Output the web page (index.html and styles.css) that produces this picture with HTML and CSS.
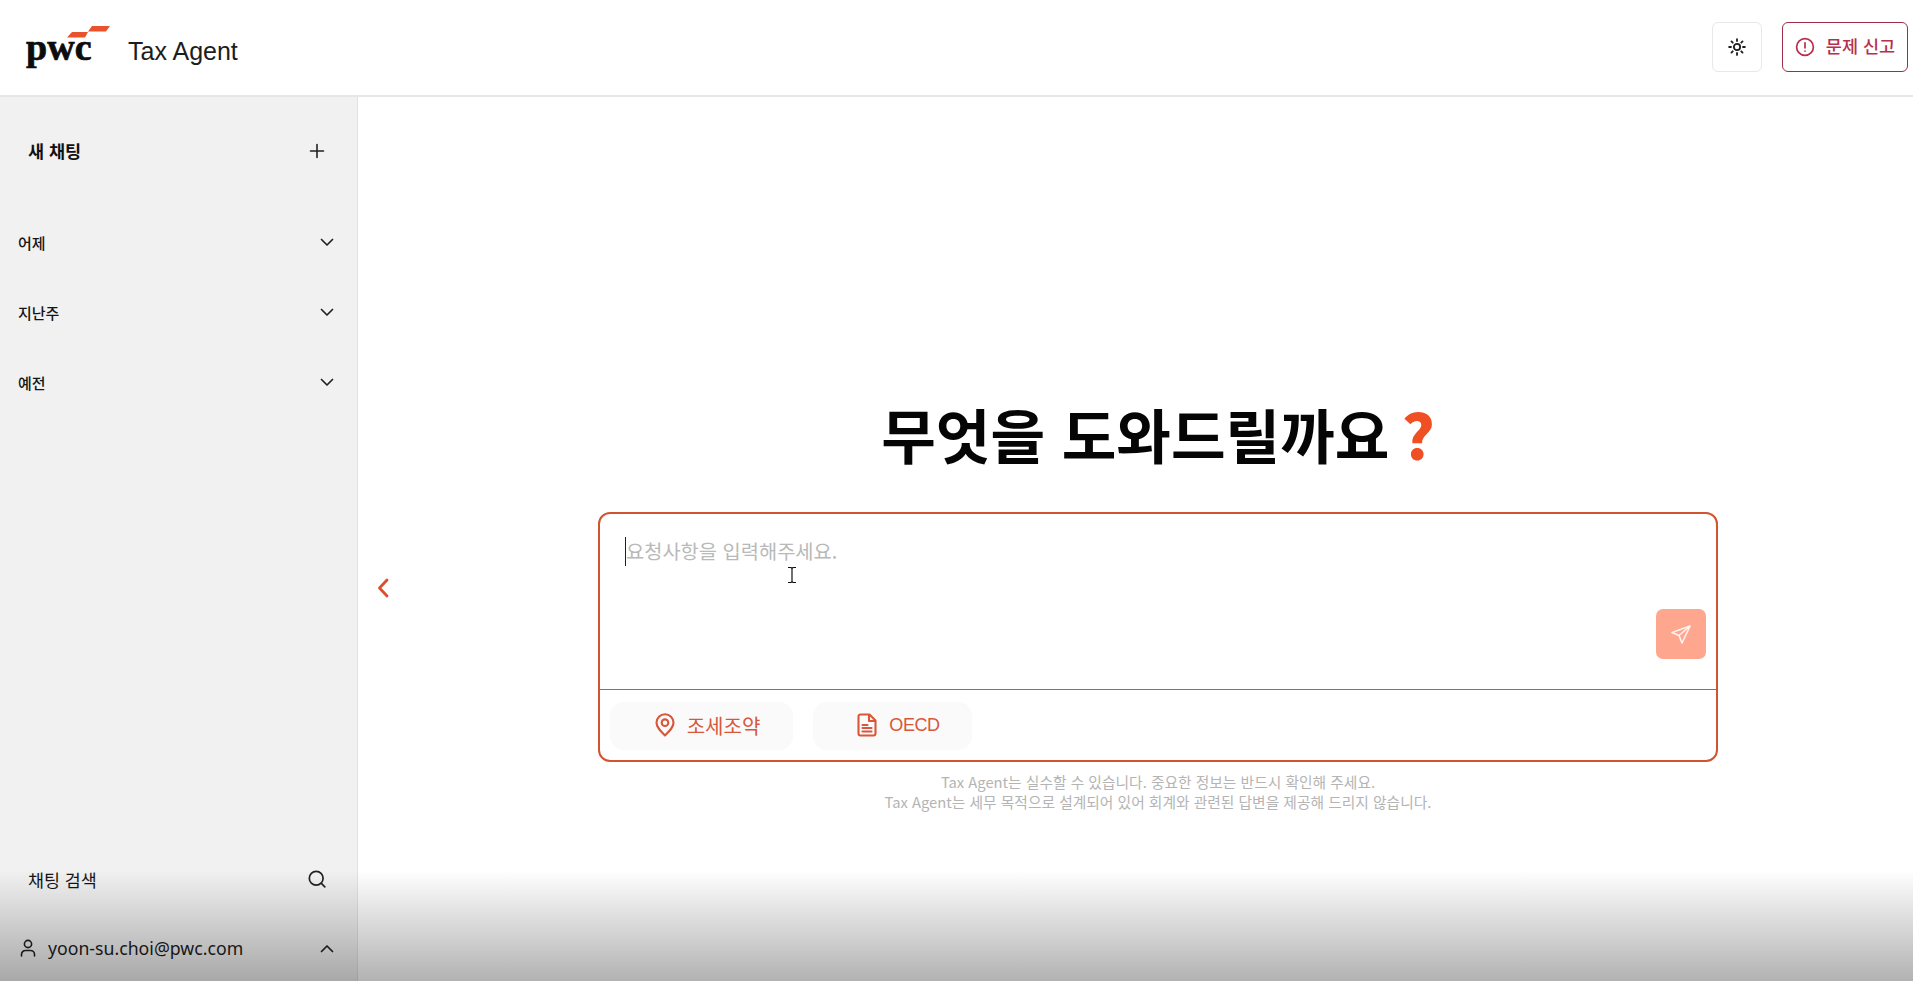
FILE: index.html
```html
<!DOCTYPE html>
<html lang="ko">
<head>
<meta charset="utf-8">
<title>Tax Agent</title>
<link rel="stylesheet" href="styles.css">
</head>
<body>
<div class="app">
  <header class="topbar">
    <div class="brand">
      <div class="logo">
        <svg class="logo-mark" width="43" height="12" viewBox="0 0 43 12"><polygon points="5,6 21,6 18,11.500 0,11.500" fill="#e8532b"/><polygon points="25,0 43,0 39,5.500 21,5.500" fill="#e8532b"/></svg>
        <span class="logo-text">pwc</span>
      </div>
      <span class="product">Tax Agent</span>
    </div>
    <div class="top-actions">
      <button class="theme-btn" aria-label="theme">
        <svg width="18" height="18" viewBox="0 0 24 24" fill="none" stroke="#1c1c1c" stroke-width="2.4" stroke-linecap="round"><circle cx="12" cy="12" r="4.2"/><path d="M12 1.500v2.500M12 20v2.500M1.500 12H4M20 12h2.500M4.600 4.600l1.700 1.700M17.700 17.700l1.700 1.700M4.600 19.400l1.700-1.700M17.700 6.300l1.700-1.700"/></svg>
      </button>
      <button class="report-btn">
        <svg width="20" height="20" viewBox="0 0 20 20" fill="none" stroke="#b92d4d" stroke-width="1.7" stroke-linecap="round"><circle cx="10" cy="10" r="8.400"/><path d="M10 5.800v5"/><path d="M10 14v.1"/></svg>
        <span>문제 신고</span>
      </button>
    </div>
  </header>
  <div class="body">
    <aside class="sidebar">
      <div class="side-top">
        <div class="new-chat">
          <span>새 채팅</span>
          <svg class="plus" width="16" height="16" viewBox="0 0 16 16" stroke="#222" stroke-width="1.6" stroke-linecap="round"><path d="M8 1.500v13M1.500 8h13"/></svg>
        </div>
        <div class="groups">
          <div class="group"><span>어제</span><svg class="chev" width="14" height="9" viewBox="0 0 14 9" fill="none" stroke="#222" stroke-width="1.7" stroke-linecap="round" stroke-linejoin="round"><path d="M1.500 1.500 7 7l5.500-5.500"/></svg></div>
          <div class="group"><span>지난주</span><svg class="chev" width="14" height="9" viewBox="0 0 14 9" fill="none" stroke="#222" stroke-width="1.7" stroke-linecap="round" stroke-linejoin="round"><path d="M1.500 1.500 7 7l5.500-5.500"/></svg></div>
          <div class="group"><span>예전</span><svg class="chev" width="14" height="9" viewBox="0 0 14 9" fill="none" stroke="#222" stroke-width="1.7" stroke-linecap="round" stroke-linejoin="round"><path d="M1.500 1.500 7 7l5.500-5.500"/></svg></div>
        </div>
      </div>
      <div class="side-bottom">
        <div class="search-row">
          <span>채팅 검색</span>
          <svg width="18" height="18" viewBox="0 0 18 18" fill="none" stroke="#222" stroke-width="1.7" stroke-linecap="round"><circle cx="8.200" cy="8.200" r="6.900"/><path d="m13.400 13.400 3.400 3.400"/></svg>
        </div>
        <div class="user-row">
          <svg width="16" height="18" viewBox="0 0 16 18" fill="none" stroke="#222" stroke-width="1.6" stroke-linecap="round"><circle cx="8" cy="5" r="3.600"/><path d="M1.500 17v-1.500a4 4 0 0 1 4-4h5a4 4 0 0 1 4 4V17"/></svg>
          <span class="email">yoon-su.choi@pwc.com</span>
          <svg class="chev" width="14" height="9" viewBox="0 0 14 9" fill="none" stroke="#222" stroke-width="1.7" stroke-linecap="round" stroke-linejoin="round"><path d="M1.500 7.500 7 2l5.500 5.500"/></svg>
        </div>
      </div>
    </aside>
    <main class="main">
      <svg class="collapse" width="12" height="20" viewBox="0 0 12 20" fill="none" stroke="#d9512c" stroke-width="2.800" stroke-linecap="round" stroke-linejoin="round"><path d="M10 2 2.500 10 10 18"/></svg>
      <div class="center">
        <h1 class="title">무엇을 도와드릴까요<span class="qmark">?</span></h1>
        <div class="composer">
          <div class="input-area">
            <div class="placeholder"><span class="caret"></span>요청사항을 입력해주세요.</div>
            <button class="send" aria-label="send">
              <svg width="22" height="22" viewBox="0 0 22 22" fill="none" stroke="#fff" stroke-opacity=".85" stroke-width="1.6" stroke-linejoin="round"><path d="M20 3 2 9.500l7 3 3 7.500z"/><path d="M20 3 9 12.500"/></svg>
            </button>
          </div>
          <div class="chips">
            <div class="chip chip-treaty">
              <svg width="20" height="24" viewBox="0 0 20 24" fill="none" stroke="#d8573a" stroke-width="2.100" stroke-linejoin="round"><path d="M10 22.500C5 17.500 1.500 14 1.500 9.700a8.500 8.500 0 0 1 17 0c0 4.300-3.500 7.800-8.500 12.800z"/><circle cx="10" cy="9.700" r="3.300"/></svg>
              <span class="chip-label">조세조약</span>
            </div>
            <div class="chip chip-oecd">
              <svg width="20" height="24" viewBox="0 0 20 24" fill="none" stroke="#d8573a" stroke-width="2.100" stroke-linejoin="round" stroke-linecap="round"><path d="M12.500 1.500H3.500a2 2 0 0 0-2 2v17a2 2 0 0 0 2 2h13a2 2 0 0 0 2-2V7.500z"/><path d="M12 2v6h6"/><path d="M5.500 12h5M5.500 15h9M5.500 18.500h9"/></svg>
              <span class="chip-label oecd-label">OECD</span>
            </div>
          </div>
        </div>
        <p class="notice">Tax Agent는 실수할 수 있습니다. 중요한 정보는 반드시 확인해 주세요.<br>Tax Agent는 세무 목적으로 설계되어 있어 회계와 관련된 답변을 제공해 드리지 않습니다.</p>
      </div>
    </main>
  </div>
  <div class="fade"></div>
  <svg class="ibeam" width="8" height="16" viewBox="0 0 8 16" fill="none" stroke="#111" stroke-width="1.200"><path d="M0 .5h3l1 1 1-1h3M4 1.500v13M0 15.500h3l1-1 1 1h3"/></svg>
</div>
</body>
</html>
```

FILE: styles.css
```css
* { box-sizing: border-box; }
html, body { margin: 0; height: 100%; overflow: hidden; }
body {
  background: #fff;
  color: #111;
  font-family: "Noto Sans CJK KR", "Noto Sans", sans-serif;
}
button { font: inherit; cursor: pointer; }
.app { position: relative; display: flex; flex-direction: column; height: 981px; }

.topbar {
  display: flex;
  justify-content: space-between;
  align-items: center;
  height: 97px;
  flex: none;
  padding: 0 5px 1px 26px;
  border-bottom: 2px solid #e6e6e6;
}
.brand { display: flex; align-items: center; gap: 19px; }
.logo { position: relative; width: 83px; height: 50px; display: flex; align-items: flex-end; padding-bottom: 6px; }
.logo-mark { position: absolute; left: 41px; top: 4px; }
.logo-text {
  font-family: "Liberation Serif", serif;
  font-weight: 700;
  font-size: 38px;
  line-height: 38px;
  letter-spacing: .1px;
  color: #0c0c0c;
  -webkit-text-stroke: .7px #0c0c0c;
}
.product {
  font-family: "Liberation Sans", Arial, sans-serif;
  font-size: 25px;
  color: #1d1d1d;
  padding-top: 8px;
}
.top-actions { display: flex; align-items: center; gap: 20px; }
.theme-btn {
  width: 50px; height: 50px;
  display: flex; align-items: center; justify-content: center;
  background: #fff;
  border: 1px solid #e8e8e8;
  border-radius: 6px;
  padding: 0;
}
.report-btn {
  width: 126px; height: 50px;
  display: flex; align-items: center; justify-content: center; gap: 11px;
  background: #fff;
  border: 1.5px solid #9c2f47;
  border-radius: 6px;
  color: #b5304c;
  font-size: 17.500px;
  font-weight: 500;
  padding: 0 0 4px;
  white-space: nowrap;
}
.report-btn svg { margin-top: 3px; }

.body { display: flex; flex: 1; min-height: 0; }
.sidebar {
  width: 358px;
  flex: none;
  display: flex;
  flex-direction: column;
  justify-content: space-between;
  background: #f1f1f2;
  border-right: 1px solid #e2e2e2;
}
.new-chat {
  display: flex; justify-content: space-between; align-items: center;
  height: 54px;
  margin-top: 27px;
  padding: 0 32px 2px 28px;
  font-size: 17.500px;
  font-weight: 700;
}
.plus { margin-top: 1px; }
.groups { margin-top: 29px; }
.group {
  display: flex; justify-content: space-between; align-items: center;
  height: 70px;
  padding: 0 23px 0 18px;
  font-size: 15px;
  font-weight: 500;
  color: #151515;
}
.search-row {
  display: flex; justify-content: space-between; align-items: center;
  height: 48px;
  padding: 0 31px 0 28px;
  font-size: 17.400px;
  color: #161616;
}
.user-row {
  display: flex; align-items: center;
  height: 58px;
  margin-top: 16px;
  margin-bottom: 4px;
  padding: 0 23px 0 20px;
}
.email {
  font-family: "Noto Sans", sans-serif;
  font-size: 17.700px;
  color: #1d1d1d;
  margin-left: 12px;
  flex: 1;
}

.main { position: relative; flex: 1; display: flex; flex-direction: column; align-items: center; padding: 301px 0 0 45px; min-width: 0; }
.collapse { position: absolute; left: 19px; top: 481px; }
.center { width: 1120px; display: flex; flex-direction: column; align-items: center; }
.title {
  margin: 0;
  font-size: 59.400px;
  line-height: 70px;
  font-weight: 700;
  color: #050505;
  display: flex;
  gap: 12px;
  align-items: center;
  white-space: nowrap;
}
.qmark { color: #f04e23; font-size: 62px; font-weight: 900; }
.composer {
  width: 100%;
  height: 250px;
  margin-top: 44px;
  border: 2px solid #d0552f;
  border-radius: 12px;
  display: flex;
  flex-direction: column;
  background: #fff;
}
.input-area {
  position: relative;
  height: 176px;
  padding: 20px 25px;
  border-bottom: 1px solid #a8693f;
}
.placeholder { display: flex; align-items: center; font-size: 19.800px; line-height: 34px; color: #b9b9b9; }
.caret { width: 1px; height: 29px; background: #222; }
.send {
  position: absolute;
  right: 10px; bottom: 30px;
  width: 50px; height: 50px;
  display: flex; align-items: center; justify-content: center;
  background: #fea68e;
  border: none;
  border-radius: 7px;
  padding: 0;
}
.chips { display: flex; gap: 20px; padding: 12px 10px 0; }
.chip {
  height: 48px;
  display: flex; align-items: center; justify-content: center; gap: 12px;
  background: #fafafa;
  border-radius: 14px;
  color: #d8573a;
  font-size: 20px;
  padding-bottom: 2px;
}
.chip-treaty { width: 183px; padding-left: 12px; }
.chip-oecd { width: 159px; padding-left: 12px; }
.oecd-label { font-family: "Liberation Sans", Arial, sans-serif; font-size: 18px; letter-spacing: -.4px; }
.notice {
  margin: 10px 0 0;
  text-align: center;
  font-size: 14.750px;
  line-height: 20px;
  color: #b4b4b4;
}

.fade {
  position: absolute;
  left: 0; right: 0; bottom: 0;
  height: 111px;
  background: linear-gradient(to bottom, rgba(0,0,0,0), rgba(0,0,0,.3));
  pointer-events: none;
}
.ibeam { position: absolute; left: 788px; top: 567px; }
```
